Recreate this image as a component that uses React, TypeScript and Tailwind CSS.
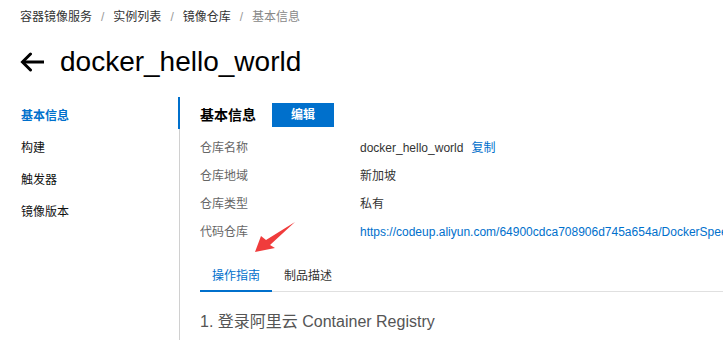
const crumbs = ["容器镜像服务", "实例列表", "镜像仓库"];
const navItems = ["基本信息", "构建", "触发器", "镜像版本"];

const font = "font-['Liberation_Sans','Noto_Sans_CJK_SC',sans-serif]";

export default function App() {
  return (
    <div className={`relative h-[340px] w-[723px] overflow-hidden bg-white text-[#333] ${font}`}>
      {/* Breadcrumb */}
      <div className="flex items-center pl-[20px] pt-[9px] text-[12px] leading-[16px]">
        {crumbs.map((c) => (
          <span key={c} className="flex items-center">
            <span className="text-[#333]">{c}</span>
            <span className="mx-[9px] text-[#999]">/</span>
          </span>
        ))}
        <span className="text-[#888]">基本信息</span>
      </div>

      {/* Title */}
      <div className="mt-[17px] flex h-[40px] items-center pl-[19px]">
        <svg width="26" height="20" viewBox="0 0 26 20" fill="none" stroke="#000" strokeWidth="3">
          <path d="M25 10H3.5" />
          <path d="M11.5 2L3.5 10L11.5 18" strokeLinecap="round" strokeLinejoin="miter" />
        </svg>
        <h1 className="ml-[15px] text-[28px] leading-[40px] text-black">docker_hello_world</h1>
      </div>

      {/* Body */}
      <div className="mt-[15px] flex">
        {/* Left nav */}
        <ul className="w-[179px] shrink-0 pl-[21px] pt-[3px] text-[12px]">
          {navItems.map((item, i) => (
            <li
              key={item}
              className={`leading-[32px] ${i === 0 ? "font-bold text-[#0070cc]" : "text-[#111]"}`}
            >
              {item}
            </li>
          ))}
        </ul>

        {/* Content */}
        <div className="relative min-h-[260px] min-w-0 flex-1 border-l border-[#d0d0d0] pl-[20px] pt-[6px]">
          <span className="absolute -left-[2px] top-0 h-[32px] w-[2px] bg-[#0070cc]" />

          <div className="flex h-[24px] items-center gap-[16px]">
            <h2 className="text-[14px] font-bold text-black">基本信息</h2>
            <button className="h-[24px] w-[62px] bg-[#0070cc] text-[12px] font-bold text-white">编辑</button>
          </div>

          <div className="mt-[7px] text-[12px] leading-[28px]">
            <div className="flex">
              <span className="w-[160px] text-[#666]">仓库名称</span>
              <span className="text-[#333]">docker_hello_world</span>
              <span className="ml-[8px] text-[#0070cc]">复制</span>
            </div>
            <div className="flex">
              <span className="w-[160px] text-[#666]">仓库地域</span>
              <span className="text-[#333]">新加坡</span>
            </div>
            <div className="flex">
              <span className="w-[160px] text-[#666]">仓库类型</span>
              <span className="text-[#333]">私有</span>
            </div>
            <div className="flex">
              <span className="w-[160px] shrink-0 text-[#666]">代码仓库</span>
              <span className="whitespace-nowrap text-[#0070cc]">
                https://codeup.aliyun.com/64900cdca708906d745a654a/DockerSpeed/docker_hello_world.git
              </span>
            </div>
          </div>

          {/* Tabs */}
          <div className="mt-[16px] flex border-b border-[#e0e0e0] text-[12px]">
            <span className="-mb-px border-b-2 border-[#0070cc] px-[12px] leading-[28px] text-[#0070cc]">操作指南</span>
            <span className="px-[12px] leading-[28px] text-[#333]">制品描述</span>
          </div>

          <h3 className="mt-[20px] text-[16px] leading-[20px] text-[#555]">1. 登录阿里云 Container Registry</h3>
        </div>
      </div>

      {/* Red annotation arrow */}
      <svg className="absolute left-0 top-0" width="723" height="340" viewBox="0 0 723 340">
        <polygon
          points="255,252 261,236 266,240 295,222 270,245 275,248"
          fill="#f03c3c"
        />
      </svg>
    </div>
  );
}
